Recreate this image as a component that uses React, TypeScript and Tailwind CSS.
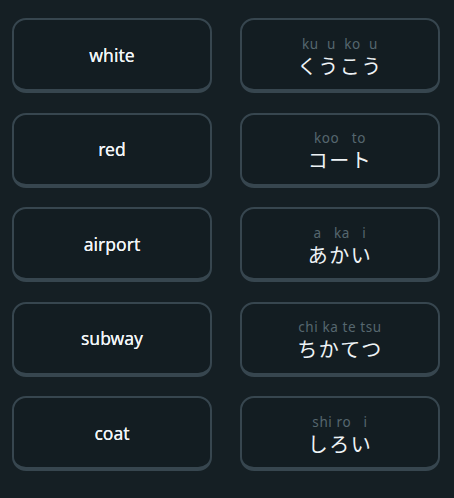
import React from "react";

interface Pair {
  en: string;
  romaji: string;
  kana: string;
}

const pairs: Pair[] = [
  { en: "white", romaji: "ku  u  ko  u", kana: "くうこう" },
  { en: "red", romaji: "koo   to", kana: "コート" },
  { en: "airport", romaji: "a   ka   i", kana: "あかい" },
  { en: "subway", romaji: "chi ka te tsu", kana: "ちかてつ" },
  { en: "coat", romaji: "shi ro   i", kana: "しろい" },
];

function Card({ children }: { children: React.ReactNode }) {
  return (
    <div className="h-[75px] rounded-[14px] border-2 border-b-4 border-[#37464f] bg-[#131d22] flex flex-col items-center justify-center">
      {children}
    </div>
  );
}

export default function App() {
  return (
    <div
      className="w-[454px] h-[498px] bg-[#151f24] pt-[18px] pl-[12px] pr-[14px]"
      style={{ fontFamily: '"Noto Sans", "Noto Sans CJK JP", sans-serif' }}
    >
      <div className="grid grid-cols-2 gap-x-[28px] gap-y-[19.5px]">
        {pairs.map((p, i) => (
          <React.Fragment key={i}>
            <Card>
              <span className="text-[17.5px] text-[#f1f5f7] leading-[20px] [text-shadow:0_0_0.4px_#f1f5f7]">
                {p.en}
              </span>
            </Card>
            <Card>
              <span className="text-[13.5px] text-[#56676f] leading-[14px] whitespace-pre tracking-[0.6px] mt-[4px]">
                {p.romaji}
              </span>
              <span className="text-[20px] text-[#eef3f6] leading-[20px] mt-[6px] tracking-[1.5px]">
                {p.kana}
              </span>
            </Card>
          </React.Fragment>
        ))}
      </div>
    </div>
  );
}
